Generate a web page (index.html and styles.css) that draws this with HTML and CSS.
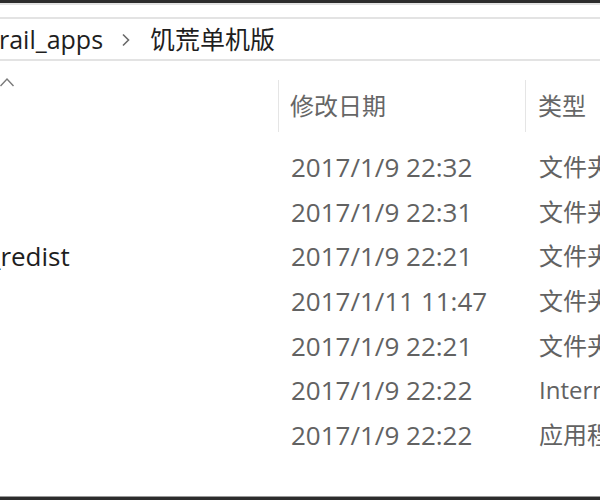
FILE: index.html
```html
<!DOCTYPE html>
<html lang="zh-CN">
<head>
<meta charset="utf-8">
<title>饥荒单机版</title>
<link rel="stylesheet" href="styles.css">
</head>
<body>
<div class="window">
  <div class="topbar"></div>
  <div class="ribbon"></div>
  <div class="address">
    <span class="crumb">rail_apps</span>
    <svg class="crumb-sep" width="10" height="14" viewBox="0 0 10 14"><polyline points="2,1.5 7.5,7 2,12.5" fill="none" stroke="#6a6a6a" stroke-width="1.6"/></svg>
    <span class="crumb">饥荒单机版</span>
  </div>
  <div class="list">
    <div class="header">
      <div class="col-name">
        <svg class="sort" width="18" height="12" viewBox="0 0 18 12"><polyline points="1.5,10 8,3 14.5,10" fill="none" stroke="#7a7a7a" stroke-width="1.4"/></svg>
      </div>
      <div class="col-date head">修改日期</div>
      <div class="col-type head">类型</div>
    </div>
    <div class="row"><div class="col-name"></div><div class="col-date">2017/1/9 22:32</div><div class="col-type">文件夹</div></div>
    <div class="row"><div class="col-name"></div><div class="col-date">2017/1/9 22:31</div><div class="col-type">文件夹</div></div>
    <div class="row"><div class="col-name"><span class="name">_redist</span></div><div class="col-date">2017/1/9 22:21</div><div class="col-type">文件夹</div></div>
    <div class="row"><div class="col-name"></div><div class="col-date">2017/1/11 11:47</div><div class="col-type">文件夹</div></div>
    <div class="row"><div class="col-name"></div><div class="col-date">2017/1/9 22:21</div><div class="col-type">文件夹</div></div>
    <div class="row"><div class="col-name"></div><div class="col-date">2017/1/9 22:22</div><div class="col-type">Internet 快捷方式</div></div>
    <div class="row"><div class="col-name"></div><div class="col-date">2017/1/9 22:22</div><div class="col-type">应用程序</div></div>
  </div>
  <div class="bottombar"></div>
</div>
</body>
</html>
```

FILE: styles.css
```css
html, body {
  margin: 0;
  padding: 0;
  background: #ffffff;
}
.window {
  width: 600px;
  height: 500px;
  overflow: hidden;
  display: flex;
  flex-direction: column;
  font-family: "Open Sans", "Noto Sans CJK SC", sans-serif;
  background: #ffffff;
}
.topbar {
  height: 3px;
  background: #2c2c2c;
  border-bottom: 2px solid #e2e2e2;
  flex: none;
}
.ribbon {
  height: 12px;
  border-bottom: 2px solid #e3e3e3;
  flex: none;
}
.address {
  height: 40px;
  border-bottom: 2px solid #e3e3e3;
  display: flex;
  align-items: center;
  flex: none;
  font-size: 25px;
  color: #1e1e1e;
  white-space: nowrap;
}
.crumb {
  line-height: 40px;
}
.crumb:first-child {
  margin-left: -1px;
}
.crumb-sep {
  margin: 2px 19px 0 18px;
}
.list {
  flex: 1;
  display: flex;
  flex-direction: column;
}
.header {
  height: 84px;
  display: flex;
  flex: none;
}
.sort {
  margin-top: 15px;
  margin-left: -1px;
  display: block;
}
.col-name {
  width: 278px;
  flex: none;
  overflow: hidden;
  white-space: nowrap;
}
.col-date {
  width: 235px;
  flex: none;
  padding-left: 13px;
  white-space: nowrap;
  color: #626262;
  font-size: 26px;
}
.col-type {
  flex: 1;
  padding-left: 13px;
  white-space: nowrap;
  overflow: hidden;
  color: #626262;
  font-size: 24px;
}
.head {
  margin-top: 19px;
  height: 52px;
  line-height: 52px;
  border-left: 1px solid #e5e5e5;
  font-size: 24px;
  color: #666666;
}
.col-date.head {
  width: 235px;
  padding-left: 11px;
  font-size: 24px;
}
.col-type.head {
  padding-left: 12px;
}
.row {
  height: 44.67px;
  line-height: 44.67px;
  display: flex;
  flex: none;
}
.name {
  display: inline-block;
  margin-left: -11px;
  font-size: 26px;
  color: #1e1e1e;
}
.bottombar {
  flex: none;
  height: 3px;
  background: #2c2c2c;
  border-top: 1px solid #9a9a9a;
}
```
